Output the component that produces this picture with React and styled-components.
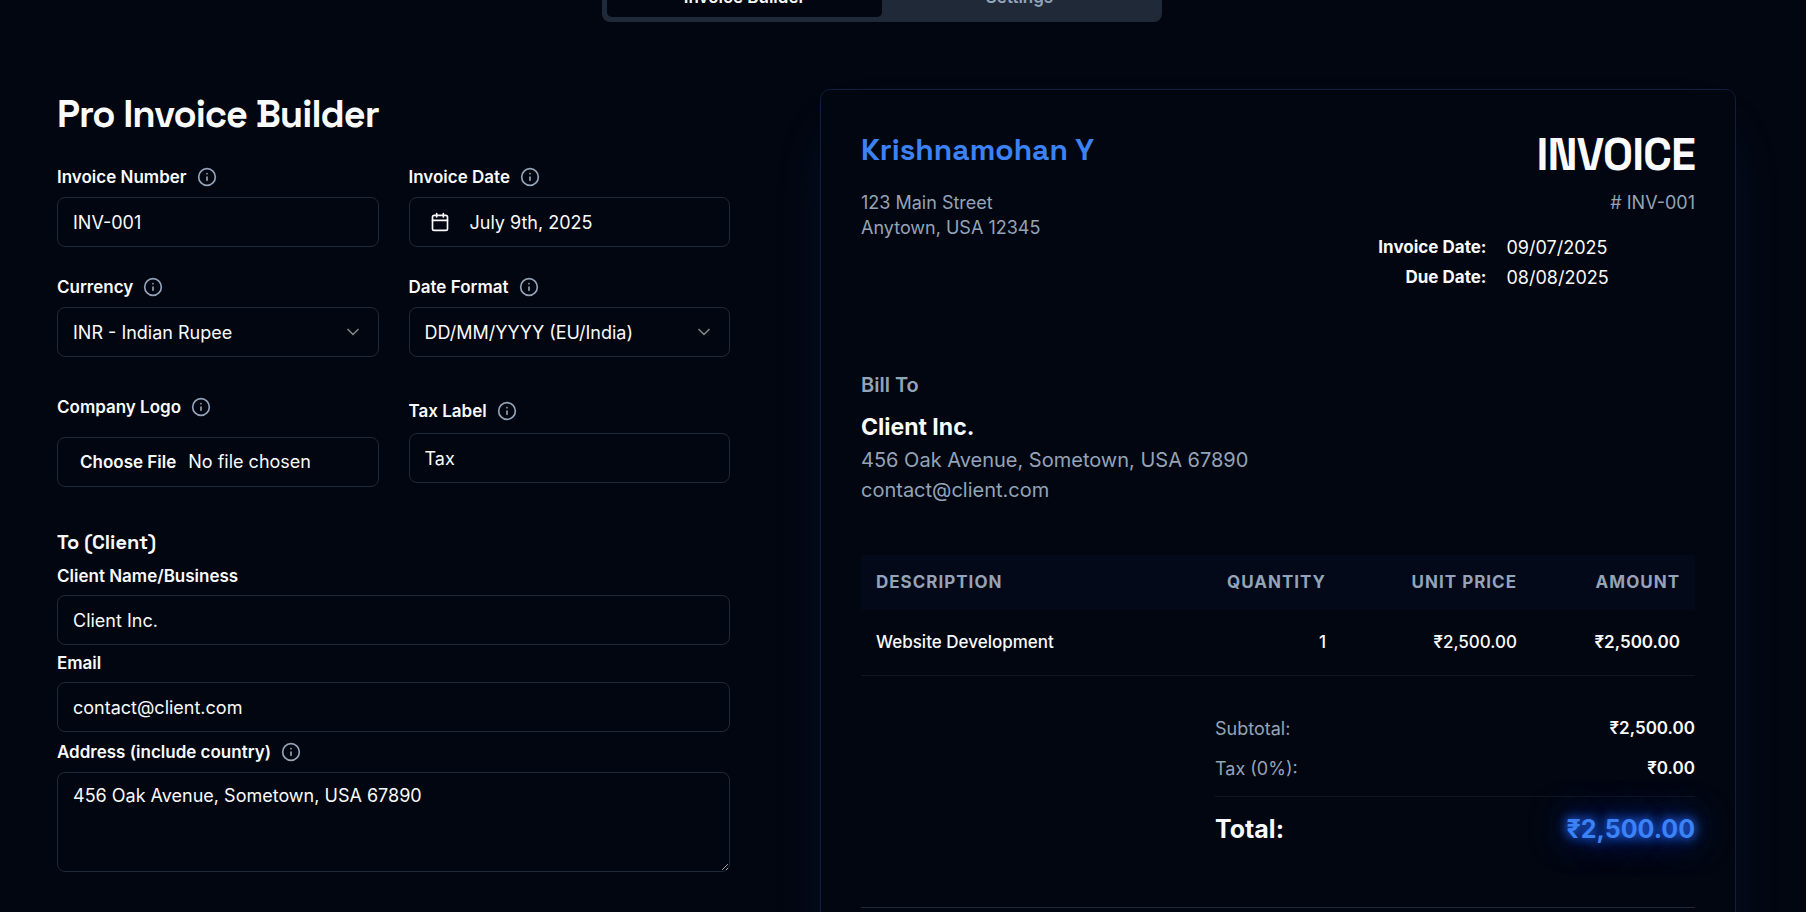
import React, { useState } from "react"
import styled, { createGlobalStyle } from "styled-components"
import { Calendar, ChevronDown, Info } from "lucide-react"

const GlobalStyle = createGlobalStyle`
  *,
  *::before,
  *::after {
    box-sizing: border-box;
  }

  body {
    margin: 0;
    background: #020610;
    color: #f9fafb;
    font-family: Inter, "Liberation Sans", sans-serif;
    font-size: 18px;
    line-height: 25px;
  }

  h1, h2, h3, p, dl, dd {
    margin: 0;
  }

  button, input, select, textarea {
    font: inherit;
    color: inherit;
  }
`

const Page = styled.div`
  height: 100vh;
  overflow: hidden;
  padding: 0 70px 0 57px;
`

const TabBar = styled.nav`
  display: flex;
  justify-content: center;
  margin: -28px 29px 67px 0;
`

const TabList = styled.div`
  display: flex;
  width: 560px;
  height: 50px;
  padding: 5px;
  border-radius: 8px;
  background: #1f2937;
`

const Tab = styled.button`
  flex: 1;
  padding: 0;
  border: 0;
  border-radius: 5px;
  font-size: 17px;
  font-weight: 600;
  background: ${props => (props.$active ? "#020610" : "transparent")};
  color: ${props => (props.$active ? "#f9fafb" : "#94a3b8")};
`

const Columns = styled.main`
  display: grid;
  grid-template-columns: minmax(0, 673fr) minmax(0, 916fr);
  column-gap: 90px;
  align-items: start;
`

const Title = styled.h1`
  margin: 2px 0 30px;
  font-family: "Space Grotesk", Inter, sans-serif;
  font-size: 38px;
  line-height: 46px;
  font-weight: 600;
  letter-spacing: -1px;
`

const Form = styled.form`
  display: flex;
  flex-direction: column;
`

const FieldGrid = styled.div`
  display: grid;
  grid-template-columns: 1fr 1fr;
  gap: 30px;
  margin-bottom: 40px;
`

const ClientFields = styled.section`
  display: flex;
  flex-direction: column;
  gap: 10px;
`

const SectionTitle = styled.h2`
  font-family: "Space Grotesk", Inter, sans-serif;
  font-size: 20px;
  line-height: 31px;
  font-weight: 700;
`

const FieldBox = styled.div`
  display: flex;
  flex-direction: column;
  gap: ${props => props.$gap || 10}px;
`

const LabelRow = styled.div`
  display: flex;
  align-items: center;
  gap: 10px;
`

const Label = styled.label`
  font-size: 17px;
  line-height: 17px;
  font-weight: 600;
`

const InfoButton = styled.button`
  display: flex;
  padding: 0;
  border: 0;
  background: none;
  color: #94a3b8;
`

const control = `
  width: 100%;
  height: 50px;
  padding: 10px 15px;
  border: 1px solid #1f2937;
  border-radius: 8px;
  background: transparent;
  outline: none;
`

const Input = styled.input`
  ${control}
`

const FileInput = styled.input`
  ${control}
  padding: 11px 15px;

  &::file-selector-button {
    margin: 0 5px 0 0;
    padding: 0 7px;
    border: 0;
    background: transparent;
    color: #f9fafb;
    font: inherit;
    font-size: 17px;
    font-weight: 600;
  }
`

const DateButton = styled.button`
  ${control}
  display: flex;
  align-items: center;
  gap: 20px;
  padding: 10px 20px;
  text-align: left;
`

const SelectWrap = styled.div`
  position: relative;

  svg {
    position: absolute;
    right: 16px;
    top: 15px;
    opacity: 0.5;
    pointer-events: none;
  }
`

const Select = styled.select`
  ${control}
  appearance: none;
`

const TextArea = styled.textarea`
  ${control}
  display: block;
  height: 100px;
  resize: vertical;
`

const Card = styled.article`
  min-height: 1100px;
  padding: 40px;
  border: 1px solid #0c1f3f;
  border-radius: 10px;
  background: #020610;
  box-shadow: 0 31px 62px -15px rgba(59, 130, 246, 0.12);
`

const CardHeader = styled.header`
  display: grid;
  grid-template-columns: 1fr 1fr;
  gap: 40px;
  margin-bottom: 80px;
`

const Business = styled.h2`
  margin-bottom: 20px;
  font-family: "Space Grotesk", Inter, sans-serif;
  font-size: 30px;
  line-height: 40px;
  font-weight: 600;
  color: #3b82f6;
`

const Muted = styled.p`
  color: #94a3b8;
`

const InvoiceHead = styled.div`
  text-align: right;
`

const InvoiceWord = styled.h2`
  margin-bottom: 10px;
  font-family: "Space Grotesk", Inter, sans-serif;
  font-size: 45px;
  line-height: 50px;
  font-weight: 700;
  letter-spacing: -1px;
`

const Dates = styled.dl`
  display: grid;
  grid-template-columns: 1fr 1fr;
  gap: 5px 20px;
  margin-top: 20px;

  dt {
    font-size: 17px;
    font-weight: 700;
  }

  dd {
    text-align: left;
  }
`

const BillTo = styled.section`
  margin-bottom: 50px;
  font-size: 20px;
  line-height: 30px;
`

const BillTitle = styled.h3`
  margin-bottom: 10px;
  font-size: 20px;
  font-weight: 600;
  color: #94a3b8;
`

const BillName = styled.p`
  font-size: 23px;
  line-height: 35px;
  font-weight: 700;
`

const Items = styled.table`
  width: 100%;
  table-layout: fixed;
  border-collapse: collapse;
  font-size: 17px;

  th {
    padding: 15px;
    background: #030918;
    color: #94a3b8;
    letter-spacing: 1px;
    text-transform: uppercase;
  }

  td {
    padding: 20px 15px;
    border-bottom: 1px solid #10151f;
  }
`

const Cell = styled.td`
  text-align: ${props => (props.$right ? "right" : "left")};
  font-weight: ${props => props.$weight || 500};
`

const Col = styled.col`
  width: ${props => props.$width};
`

const Totals = styled.dl`
  display: flex;
  flex-direction: column;
  gap: 15px;
  max-width: 480px;
  margin: 40px 0 60px auto;
`

const TotalRow = styled.div`
  display: flex;
  justify-content: space-between;

  dt {
    color: #94a3b8;
  }

  dd {
    font-size: 17px;
    font-weight: 600;
  }
`

const GrandTotal = styled.div`
  display: flex;
  justify-content: space-between;
  padding-top: 15px;
  border-top: 1px solid #10151f;
  font-size: 25px;
  line-height: 35px;
  font-weight: 700;

  dd {
    color: #3b82f6;
    text-shadow: 0 0 10px #2563eb, 0 0 14px #1d4ed8, 0 0 38px #2563eb;
  }
`

const CardFooter = styled.footer`
  border-top: 1px solid #1f2937;
`

const Field = ({ id, label, info, gap, children }) => (
  <FieldBox $gap={gap}>
    <LabelRow>
      <Label htmlFor={id}>{label}</Label>
      {info && (
        <InfoButton type="button" aria-label={`About ${label}`}>
          <Info size={20} />
        </InfoButton>
      )}
    </LabelRow>
    {children}
  </FieldBox>
)

/* shorter than the file field beside it, so it is centred in its row */
const CenteredField = styled.div`
  align-self: center;
`

const Dropdown = ({ id, options }) => (
  <SelectWrap>
    <Select id={id}>
      {options.map(option => (
        <option key={option}>{option}</option>
      ))}
    </Select>
    <ChevronDown size={20} />
  </SelectWrap>
)

const App = () => {
  const [tab, setTab] = useState("Invoice Builder")
  const [number, setNumber] = useState("INV-001")
  const [taxLabel, setTaxLabel] = useState("Tax")
  const [client, setClient] = useState("Client Inc.")
  const [email, setEmail] = useState("contact@client.com")
  const [address, setAddress] = useState("456 Oak Avenue, Sometown, USA 67890")

  return (
    <>
      <GlobalStyle />
      <Page>
        <TabBar>
          <TabList role="tablist">
            {["Invoice Builder", "Settings"].map(name => (
              <Tab
                key={name}
                role="tab"
                aria-selected={tab === name}
                $active={tab === name}
                onClick={() => setTab(name)}
              >
                {name}
              </Tab>
            ))}
          </TabList>
        </TabBar>
        <Columns>
          <Form>
            <Title>Pro Invoice Builder</Title>
            <FieldGrid>
              <Field id="number" label="Invoice Number" info>
                <Input
                  id="number"
                  value={number}
                  onChange={e => setNumber(e.target.value)}
                />
              </Field>
              <Field id="date" label="Invoice Date" info>
                <DateButton id="date" type="button">
                  <Calendar size={20} />
                  July 9th, 2025
                </DateButton>
              </Field>
              <Field id="currency" label="Currency" info>
                <Dropdown
                  id="currency"
                  options={["INR - Indian Rupee", "USD - US Dollar"]}
                />
              </Field>
              <Field id="format" label="Date Format" info>
                <Dropdown
                  id="format"
                  options={["DD/MM/YYYY (EU/India)", "MM/DD/YYYY (US)"]}
                />
              </Field>
            </FieldGrid>
            <FieldGrid>
              <Field id="logo" label="Company Logo" info gap={20}>
                <FileInput id="logo" type="file" />
              </Field>
              <CenteredField>
                <Field id="tax" label="Tax Label" info gap={12}>
                  <Input
                    id="tax"
                    value={taxLabel}
                    onChange={e => setTaxLabel(e.target.value)}
                  />
                </Field>
              </CenteredField>
            </FieldGrid>
            <ClientFields>
              <SectionTitle>To (Client)</SectionTitle>
              <Field id="client" label="Client Name/Business">
                <Input
                  id="client"
                  value={client}
                  onChange={e => setClient(e.target.value)}
                />
              </Field>
              <Field id="email" label="Email">
                <Input
                  id="email"
                  value={email}
                  onChange={e => setEmail(e.target.value)}
                />
              </Field>
              <Field id="address" label="Address (include country)" info>
                <TextArea
                  id="address"
                  value={address}
                  onChange={e => setAddress(e.target.value)}
                />
              </Field>
            </ClientFields>
          </Form>
          <Card>
            <CardHeader>
              <div>
                <Business>Krishnamohan Y</Business>
                <Muted>123 Main Street</Muted>
                <Muted>Anytown, USA 12345</Muted>
              </div>
              <InvoiceHead>
                <InvoiceWord>INVOICE</InvoiceWord>
                <Muted># {number}</Muted>
                <Dates>
                  <dt>Invoice Date:</dt>
                  <dd>09/07/2025</dd>
                  <dt>Due Date:</dt>
                  <dd>08/08/2025</dd>
                </Dates>
              </InvoiceHead>
            </CardHeader>
            <BillTo>
              <BillTitle>Bill To</BillTitle>
              <BillName>{client}</BillName>
              <Muted>{address}</Muted>
              <Muted>{email}</Muted>
            </BillTo>
            <Items>
              <colgroup>
                <Col />
                <Col $width="190px" />
                <Col $width="191px" />
                <Col $width="163px" />
              </colgroup>
              <thead>
                <tr>
                  <Cell as="th" $weight={700}>Description</Cell>
                  <Cell as="th" $weight={700} $right>Quantity</Cell>
                  <Cell as="th" $weight={700} $right>Unit Price</Cell>
                  <Cell as="th" $weight={700} $right>Amount</Cell>
                </tr>
              </thead>
              <tbody>
                <tr>
                  <Cell>Website Development</Cell>
                  <Cell $right>1</Cell>
                  <Cell $right>₹2,500.00</Cell>
                  <Cell $right $weight={600}>₹2,500.00</Cell>
                </tr>
              </tbody>
            </Items>
            <Totals>
              <TotalRow>
                <dt>Subtotal:</dt>
                <dd>₹2,500.00</dd>
              </TotalRow>
              <TotalRow>
                <dt>{taxLabel} (0%):</dt>
                <dd>₹0.00</dd>
              </TotalRow>
              <GrandTotal>
                <dt>Total:</dt>
                <dd>₹2,500.00</dd>
              </GrandTotal>
            </Totals>
            <CardFooter />
          </Card>
        </Columns>
      </Page>
    </>
  )
}

export default App
